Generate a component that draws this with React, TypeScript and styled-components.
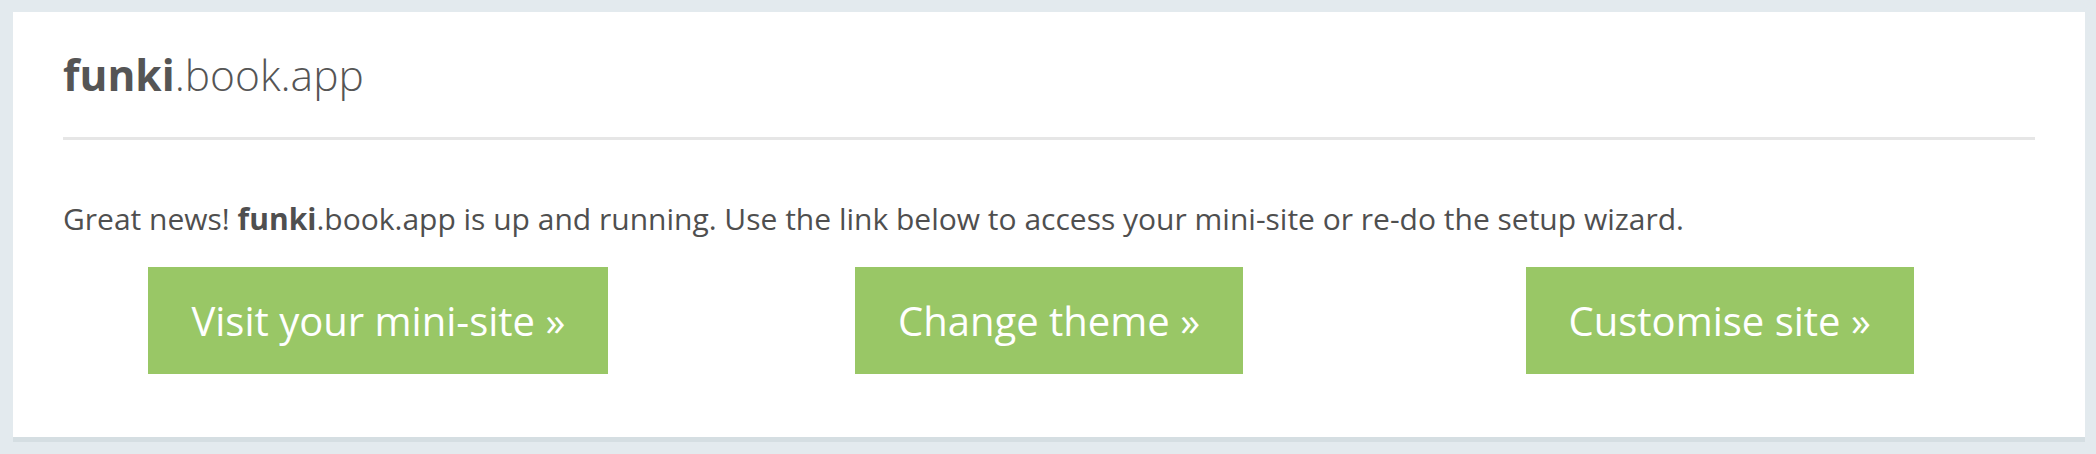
import React from "react";
import styled, { createGlobalStyle } from "styled-components";

const GlobalStyle = createGlobalStyle`
  html, body {
    margin: 0;
    padding: 0;
    background: #e3eaee;
    font-family: "Open Sans", "Liberation Sans", sans-serif;
  }
  #root {
    min-height: 454px;
  }
`;

const Page = styled.div`
  padding: 12px 11px 17px 13px;
`;

const Card = styled.section`
  background: #ffffff;
  box-shadow: 0 5px 0 #d5dee2;
  padding: 34px 50px 63px 50px;
  color: #4f4f4f;
`;

const Title = styled.h1`
  margin: 0;
  font-size: 42.5px;
  line-height: 57px;
  font-weight: 300;
  color: #555555;
  letter-spacing: 0;
`;

const Strong = styled.strong`
  font-weight: 700;
`;

const Rule = styled.hr`
  margin: 34px 0 0 0;
  border: 0;
  height: 3px;
  background: #e6e6e6;
`;

const Intro = styled.p`
  margin: 59px 0 0 0;
  font-size: 30px;
  line-height: 40px;
  font-weight: 400;
  color: #4f4f4f;
`;

const Actions = styled.div`
  display: grid;
  grid-template-columns: repeat(3, 1fr);
  margin: 28px -20px 0 -20px;
`;

const Cell = styled.div`
  display: flex;
  justify-content: center;
`;

const ActionButton = styled.a`
  display: inline-block;
  background: #99c766;
  color: #ffffff;
  font-size: 40px;
  line-height: 56px;
  font-weight: 400;
  padding: 25.5px 43px;
  text-decoration: none;
  white-space: nowrap;
`;

const actions = ["Visit your mini-site »", "Change theme »", "Customise site »"];

export default function App() {
  return (
    <>
      <GlobalStyle />
      <Page>
        <Card>
          <Title>
            <Strong>funki</Strong>.book.app
          </Title>
          <Rule />
          <Intro>
            Great news! <Strong>funki</Strong>.book.app is up and running. Use the link below to
            access your mini-site or re-do the setup wizard.
          </Intro>
          <Actions>
            {actions.map((label) => (
              <Cell key={label}>
                <ActionButton href="#">{label}</ActionButton>
              </Cell>
            ))}
          </Actions>
        </Card>
      </Page>
    </>
  );
}
